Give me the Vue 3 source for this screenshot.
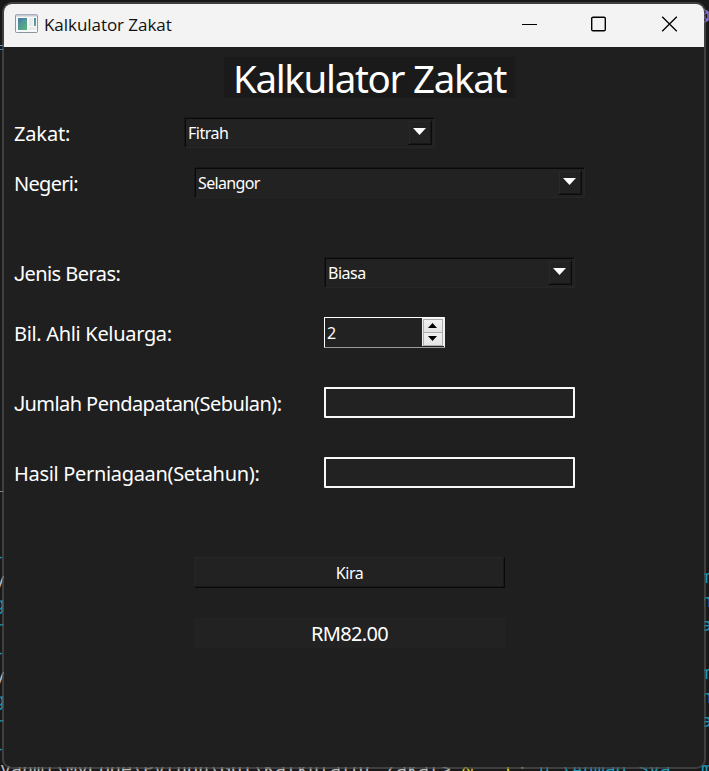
<script setup>
import { ref } from 'vue'

const family = ref(2)
const income = ref('')
const business = ref('')
const rightFragments = ['m', 'n', 'a', '', 'm', 'n', 'a', '', 'm']
const leftFragments = ['-', 'y', 'g', 'r', '-', 'y', 'g', 'r', '-']
</script>

<template>
  <div class="desktop">
    <div class="code-left">
      <span v-for="(part, i) in leftFragments" :key="i" :class="{ pale: part === 'y' }">{{ part }}</span>
    </div>
    <div class="code-right">
      <span v-for="(part, i) in rightFragments" :key="i">{{ part }}</span>
    </div>
    <div class="edge-mark upper"></div>
    <div class="edge-mark lower"></div>
    <svg class="corner-mark" width="8" height="18" viewBox="0 0 8 18">
      <path d="M0 1L7 5V13L0 17M0 9L7 5M0 6L6 13" fill="none" stroke="#8a70dc" stroke-width="1.5" />
    </svg>
    <div class="terminal">yahmi\MyCode\Python\GUI\Kalkulator Zakat&gt; <b>&amp;</b> <b> "C:</b><i> u \Ahmad Sya</i></div>

    <main class="window">
      <header class="titlebar">
        <svg class="app-icon" width="23" height="19" viewBox="0 0 23 19">
          <defs>
            <linearGradient id="pane" x1="0" y1="0" x2="1" y2="1">
              <stop offset="0" stop-color="#517fae" />
              <stop offset="1" stop-color="#59b777" />
            </linearGradient>
          </defs>
          <rect x=".5" y=".5" width="22" height="18" rx="1" fill="#f7f8f9" stroke="#8d959e" />
          <path d="M1 1.5H22" stroke="#c3cad3" stroke-width="2" />
          <rect x="3" y="4" width="9" height="12" fill="url(#pane)" />
          <path d="M3 9Q7 5 12 5V4H3Z" fill="#477eab" opacity=".6" />
          <rect x="14" y="4" width="4" height="8" fill="#e9ebed" />
          <rect x="19" y="4" width="2" height="8" fill="url(#pane)" />
          <rect x="14" y="13" width="7" height="3" fill="#e9ebed" />
        </svg>
        <span class="caption">Kalkulator Zakat</span>
        <svg class="controls" width="156" height="16" viewBox="0 0 156 16" fill="none" stroke="#000">
          <path d="M0 8.5H15" />
          <rect x="69.7" y="1.2" width="13.6" height="13.6" rx="1.3" stroke-width="1.4" />
          <path d="M140.2 .7L154.8 15.3M154.8 .7L140.2 15.3" stroke-width="1.3" />
        </svg>
      </header>

      <section class="content">
        <h1>Kalkulator Zakat</h1>

        <div class="row zakat">
          <label>Zakat:</label>
          <div class="combo">
            <span>Fitrah</span>
            <div class="drop"><svg width="13" height="7" viewBox="0 0 13 7"><path d="M0 0H13L6.5 7Z" /></svg></div>
          </div>
        </div>
        <div class="row negeri">
          <label>Negeri:</label>
          <div class="combo">
            <span class="state">Selangor</span>
            <div class="drop"><svg width="13" height="7" viewBox="0 0 13 7"><path d="M0 0H13L6.5 7Z" /></svg></div>
          </div>
        </div>
        <div class="row beras">
          <label class="j-label">Jenis Beras:</label>
          <div class="combo">
            <span>Biasa</span>
            <div class="drop"><svg width="13" height="7" viewBox="0 0 13 7"><path d="M0 0H13L6.5 7Z" /></svg></div>
          </div>
        </div>
        <div class="row keluarga">
          <label>Bil. Ahli Keluarga:</label>
          <div class="spin">
            <span>{{ family }}</span>
            <div class="steps">
              <button @click="family++"><svg width="9" height="5" viewBox="0 0 9 5"><path d="M4.5 0L9 5H0Z" /></svg></button>
              <button @click="family--"><svg width="9" height="5" viewBox="0 0 9 5"><path d="M0 0H9L4.5 5Z" /></svg></button>
            </div>
          </div>
        </div>
        <div class="row pendapatan">
          <label class="j-label">Jumlah Pendapatan(Sebulan):</label>
          <input v-model="income" type="text" />
        </div>
        <div class="row hasil">
          <label>Hasil Perniagaan(Setahun):</label>
          <input v-model="business" type="text" />
        </div>

        <button class="kira">Kira</button>
        <output class="result">RM82.00</output>
      </section>
    </main>
  </div>
</template>

<style>
body { margin: 0; background: #191919; overflow: hidden; }
</style>

<style scoped>
* { box-sizing: border-box; }
.desktop {
  position: relative;
  width: 709px;
  height: 771px;
  padding: 2px;
  overflow: hidden;
  background: #191919;
  font-family: "Noto Sans", sans-serif;
}
.code-left, .code-right {
  position: absolute;
  top: 544px;
  display: flex;
  flex-direction: column;
  font: 18.27px/24px "DejaVu Sans Mono", monospace;
  color: #1a9cbe;
}
.code-left { left: -6px; }
.code-right { left: 701px; top: 565px; }
.code-left span, .code-right span { height: 24px; }
.code-left .pale { color: #bbb; }
.edge-mark { position: absolute; left: 0; width: 4px; height: 1px; background: #569cd6; }
.upper { top: 45px; box-shadow: 0 4px #4786b5; }
.lower { top: 491px; background: #888; }
.corner-mark { position: absolute; left: 701px; top: 7px; }
.terminal {
  position: absolute;
  left: 0;
  top: 757px;
  white-space: pre;
  font: 18.27px/24px "DejaVu Sans Mono", monospace;
  color: #bbb;
}
.terminal b { font-weight: 400; color: #d5d51c; }
.terminal i { font-style: normal; color: #1a9cbe; }
.window {
  position: relative;
  width: 704px;
  height: 767px;
  border: 2px solid rgba(80, 80, 80, .7);
  border-radius: 10px;
  overflow: hidden;
  background: #1f1f1f;
  background-clip: padding-box;
}
.titlebar {
  display: flex;
  align-items: center;
  height: 43px;
  padding: 0 26px 0 11px;
  background: #f3f3f3;
}
.app-icon { margin-top: -4px; }
.caption {
  margin: -1px 0 0 6px;
  font: 17px/24px "Open Sans", sans-serif;
  letter-spacing: -.05px;
  color: #111;
}
.controls { margin-left: auto; margin-top: -3px; }
.content {
  display: flex;
  flex-direction: column;
  align-items: flex-start;
  height: 720px;
  padding-top: 10px;
  color: #fff;
}
h1 {
  width: 291px;
  height: 41px;
  margin: 0 0 0 220px;
  background: #1a1a1a;
  font-size: 38.5px;
  font-weight: 400;
  line-height: 43px;
  letter-spacing: -1.3px;
  text-align: center;
  white-space: nowrap;
}
.row { display: grid; grid-template-columns: 310px 251px; height: 31px; padding-left: 10px; }
.zakat { grid-template-columns: 170px 251px; margin-top: 19px; }
.negeri { grid-template-columns: 180px 391px; margin-top: 19px; }
.beras { margin-top: 59px; }
.keluarga { margin-top: 29px; }
.pendapatan, .hasil { margin-top: 39px; }
label { font-size: 20px; line-height: 33px; letter-spacing: -.32px; white-space: nowrap; }
.zakat label { letter-spacing: -.15px; }
.negeri label { letter-spacing: -.7px; }
.j-label { letter-spacing: -.56px; }
.j-label::first-letter { font-family: "Roboto", sans-serif; }
.combo {
  display: flex;
  justify-content: space-between;
  height: 31px;
  padding: 2px 2px 1px 3px;
  border: 1px solid;
  border-color: #171717 #262626 #262626 #171717;
  background: #222;
  box-shadow: inset 1px 1px #090909;
  font-size: 16px;
  line-height: 27px;
  letter-spacing: -.5px;
}
.state { letter-spacing: -.65px; }
.drop {
  width: 24px;
  height: 25px;
  padding: 7px 0 0 4px;
  border: 1px solid;
  border-color: #222 #0b0b0b #0b0b0b #222;
  box-shadow: inset 1px 1px #282828, inset -1px -1px #171717;
}
.drop svg { display: block; fill: #fff; }
.spin {
  display: flex;
  justify-content: space-between;
  width: 121px;
  height: 31px;
  border: 1px solid;
  border-color: #fff #f0f0f0 #999 #fff;
  border-radius: 1px;
  background: #222;
}
.spin span { padding-left: 2px; font-size: 16px; line-height: 31px; }
.steps { display: flex; flex-direction: column; width: 22px; height: 28px; padding: 1px 0 0 1px; background: #f0f0f0; }
.steps button {
  display: flex;
  align-items: flex-start;
  justify-content: flex-start;
  width: 20px;
  height: 14px;
  padding: 3px 0 0 4px;
  border: 1px solid #adadad;
  background: linear-gradient(#f0f0f0, #e4e4e4);
}
.steps button + button { margin-top: -1px; }
.steps svg { display: block; fill: #000; }
input {
  width: 251px;
  height: 31px;
  border: 2px solid #f8f8f8;
  border-radius: 1px;
  outline: 0;
  background: #222;
  color: #fff;
}
.kira, .result {
  display: block;
  width: 311px;
  height: 31px;
  margin-left: 190px;
  background: #222;
  color: #fff;
  text-align: center;
}
.kira {
  margin-top: 69px;
  padding: 0;
  border: 1px solid;
  border-color: #262626 #090909 #090909 #262626;
  box-shadow: inset -1px -1px #191919;
  font: 16px/30px "Noto Sans", sans-serif;
  letter-spacing: -.45px;
}
.result { margin-top: 29px; font-size: 20px; line-height: 33px; letter-spacing: -.65px; }
</style>
